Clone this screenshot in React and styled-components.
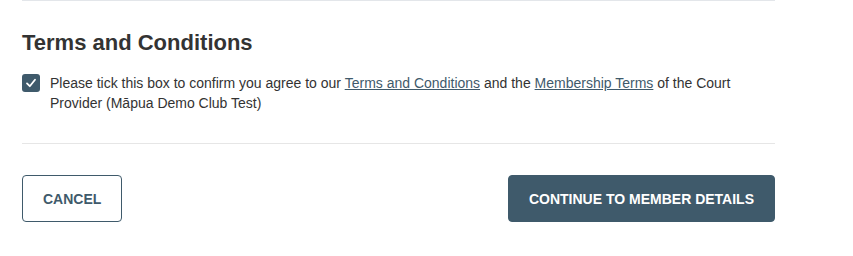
import React, { useState } from 'react';
import styled, { createGlobalStyle } from 'styled-components';

const GlobalStyle = createGlobalStyle`
  body {
    margin: 0;
    background: #ffffff;
    font-family: "Liberation Sans", Arial, sans-serif;
    color: #333333;
  }
`;

const Page = styled.div`
  width: 753px;
  margin-left: 22px;
  border-top: 1px solid #e3e6ea;
`;

const Section = styled.section`
  padding: 29px 0 30px;
  border-bottom: 1px solid #e6e6e6;
`;

const Heading = styled.h2`
  margin: 0 0 17px;
  font-size: 22px;
  line-height: 26px;
  font-weight: 700;
  color: #333333;
`;

const ConsentRow = styled.label`
  display: flex;
  align-items: flex-start;
  gap: 10px;
  font-size: 14px;
  line-height: 20px;
  color: #333333;
  cursor: pointer;
`;

const Box = styled.span`
  flex: none;
  width: 18px;
  height: 18px;
  margin-top: 1px;
  border-radius: 3px;
  background: ${(p) => (p.checked ? '#3f5a6b' : '#ffffff')};
  border: ${(p) => (p.checked ? 'none' : '1px solid #3f5a6b')};
  box-sizing: border-box;
  display: flex;
  align-items: center;
  justify-content: center;
`;

const HiddenInput = styled.input`
  position: absolute;
  opacity: 0;
  width: 0;
  height: 0;
`;

const Link = styled.a`
  color: #3f5a6b;
  text-decoration: underline;
  cursor: pointer;
`;

const Actions = styled.div`
  display: flex;
  justify-content: space-between;
  align-items: center;
  padding-top: 31px;
`;

const Button = styled.button`
  height: 47px;
  padding: 0 20px;
  border-radius: 4px;
  border: 1px solid #3f5a6b;
  background: ${(p) => (p.primary ? '#3f5a6b' : '#ffffff')};
  color: ${(p) => (p.primary ? '#ffffff' : '#3f5a6b')};
  font-family: "Liberation Sans", Arial, sans-serif;
  font-size: 14px;
  font-weight: 700;
  text-transform: uppercase;
  cursor: pointer;
`;

const Check = () => (
  <svg width="12" height="12" viewBox="0 0 12 12" fill="none">
    <path d="M2 6.4 L4.8 9.2 L10 2.8" stroke="#ffffff" strokeWidth="1.8" strokeLinecap="round" strokeLinejoin="round" />
  </svg>
);

const App = () => {
  const [agreed, setAgreed] = useState(true);

  return (
    <>
      <GlobalStyle />
      <Page>
        <Section>
          <Heading>Terms and Conditions</Heading>
          <ConsentRow>
            <HiddenInput
              type="checkbox"
              checked={agreed}
              onChange={() => setAgreed(!agreed)}
            />
            <Box checked={agreed}>{agreed && <Check />}</Box>
            <span>
              Please tick this box to confirm you agree to our{' '}
              <Link>Terms and Conditions</Link> and the{' '}
              <Link>Membership Terms</Link> of the Court Provider (Māpua Demo Club Test)
            </span>
          </ConsentRow>
        </Section>
        <Actions>
          <Button>Cancel</Button>
          <Button primary>Continue to member details</Button>
        </Actions>
      </Page>
    </>
  );
};

export default App;
